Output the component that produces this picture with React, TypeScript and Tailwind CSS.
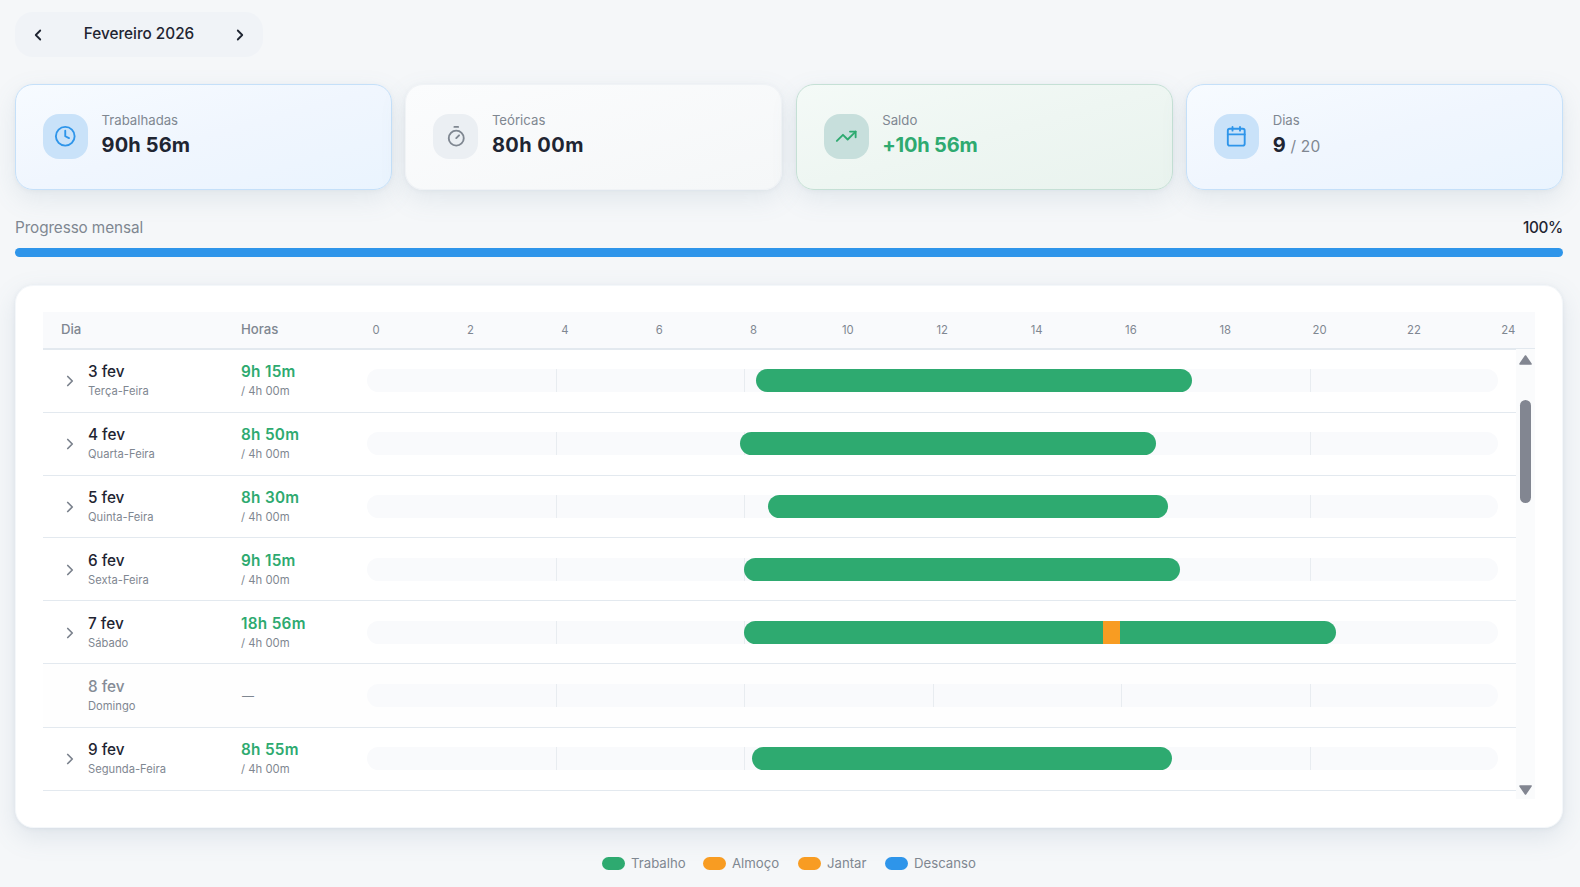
import { Calendar, ChevronLeft, ChevronRight, Clock, Timer, TrendingUp } from "lucide-react";
import type { LucideIcon } from "lucide-react";

type Segment = { from: number; to: number; color: string };
type Day = { day: string; weekday: string; worked?: string; row: string; segments: Segment[] };

const GREEN = "bg-[#2eaa70]";
const ORANGE = "bg-[#f89c22]";
const BLUE = "bg-[#2e95ea]";

const days: Day[] = [
  { day: "3 fev", weekday: "Terça-Feira", row: "h-[63px] pt-[19px]", worked: "9h 15m", segments: [{ from: 8.25, to: 17.5, color: GREEN }] },
  { day: "4 fev", weekday: "Quarta-Feira", row: "h-[63px] pt-[19px]", worked: "8h 50m", segments: [{ from: 7.917, to: 16.75, color: GREEN }] },
  { day: "5 fev", weekday: "Quinta-Feira", row: "h-[62px] pt-[19px]", worked: "8h 30m", segments: [{ from: 8.5, to: 17, color: GREEN }] },
  { day: "6 fev", weekday: "Sexta-Feira", row: "h-[63px] pt-[20px]", worked: "9h 15m", segments: [{ from: 8, to: 17.25, color: GREEN }] },
  {
    day: "7 fev",
    weekday: "Sábado",
    row: "h-[63px] pt-[20px]",
    worked: "18h 56m",
    segments: [
      { from: 8, to: 15.62, color: GREEN },
      { from: 15.62, to: 15.98, color: ORANGE },
      { from: 15.98, to: 20.56, color: GREEN },
    ],
  },
  { day: "8 fev", weekday: "Domingo", row: "h-[64px] pt-[20px]", segments: [] },
  { day: "9 fev", weekday: "Segunda-Feira", row: "h-[63px] pt-[19px]", worked: "8h 55m", segments: [{ from: 8.167, to: 17.083, color: GREEN }] },
];

const ticks = [0, 2, 4, 6, 8, 10, 12, 14, 16, 18, 20, 22, 24];
const gridHours = [4, 8, 12, 16, 20];

function StatCard({
  icon: Icon,
  label,
  value,
  suffix,
  card,
  badge,
  valueClass,
}: {
  icon: LucideIcon;
  label: string;
  value: string;
  suffix?: string;
  card: string;
  badge: string;
  valueClass: string;
}) {
  return (
    <div
      className={`flex h-[106px] items-center gap-[13.5px] rounded-[18px] border bg-linear-to-br px-[27px] pb-[2px] shadow-[0_9px_26px_rgba(100,130,155,0.13),0_1px_4px_rgba(100,130,155,0.08)] ${card}`}
    >
      <div className={`flex size-[45px] items-center justify-center rounded-[16px] ${badge}`}>
        <Icon size={22.5} strokeWidth={2} />
      </div>
      <div className="mb-[2px]">
        <div className="text-[13.2px] leading-[18px] text-[#7f8791]">{label}</div>
        <div className={`mt-[2px] flex h-[28px] items-baseline text-[20px] leading-[28px] font-bold whitespace-pre ${valueClass}`}>
          {value}
          {suffix && <span className="text-[15.5px] font-normal text-[#7f8791]"> {suffix}</span>}
        </div>
      </div>
    </div>
  );
}

function DayRow({ item }: { item: Day }) {
  const off = !item.worked;
  return (
    <div className={`flex shrink-0 items-start border-b border-[#e3e9ef] ${item.row} ${off ? "bg-[#fefefe]" : ""}`}>
      <div className="flex h-[23px] w-[198px] shrink-0 items-center pl-[18px]">
        <div className="flex w-[27px] text-[#7b828d]">{!off && <ChevronRight size={18} strokeWidth={2.3} />}</div>
        <div className="-mt-px">
          <div className={`text-[15.3px] leading-[23px] font-[450] ${off ? "text-[#858c96]" : "text-[#1f2532]"}`}>{item.day}</div>
          <div className="text-[11.2px] leading-[17px] text-[#7f8791]">{item.weekday}</div>
        </div>
      </div>
      <div className="flex h-[23px] w-[126px] shrink-0 flex-col justify-center">
        {off ? (
          <div className="pt-px pl-px text-[12px] leading-[18px] font-medium text-[#7f8791]">—</div>
        ) : (
          <div className="-mt-px">
            <div className="text-[15.3px] leading-[23px] font-semibold tracking-[0.3px] text-[#2eaa70]">{item.worked}</div>
            <div className="text-[11.3px] leading-[17px] text-[#7f8791]">/ 4h 00m</div>
          </div>
        )}
      </div>
      <div className="relative h-[23px] w-[1131px] overflow-hidden rounded-full bg-[#f9fafc]">
        {gridHours.map((h) => (
          <div key={h} className="absolute top-0 h-full w-px bg-[#e8ecf0]" style={{ left: `${(h / 24) * 100}%` }} />
        ))}
        {item.segments.map((s, i) => (
          <div
            key={s.from}
            className={`absolute top-0 h-full ${s.color} ${i === 0 ? "rounded-l-full" : ""} ${i === item.segments.length - 1 ? "rounded-r-full" : ""}`}
            style={{ left: `${(s.from / 24) * 100}%`, width: `${((s.to - s.from) / 24) * 100}%` }}
          />
        ))}
      </div>
    </div>
  );
}

function Legend({ color, label, width }: { color: string; label: string; width: string }) {
  return (
    <div className="flex items-center gap-[6.5px]">
      <span className={`h-[13px] w-[23px] rounded-full ${color}`} />
      <span className={`text-[13.2px] leading-[18px] whitespace-nowrap text-[#7f8791] ${width}`}>{label}</span>
    </div>
  );
}

export default function App() {
  return (
    <div className="flex h-[887px] w-[1580px] flex-col overflow-hidden bg-[#f5f7f9] px-[15px] pt-3 font-['Inter','Liberation_Sans',sans-serif] text-[#1f2532]">
      <div className="flex h-[45px] w-[248px] shrink-0 items-center justify-between rounded-[18px] bg-[#f0f3f7] px-[14px]">
        <ChevronLeft size={18} strokeWidth={2.4} />
        <span className="text-[15.3px] font-[450]">Fevereiro 2026</span>
        <ChevronRight size={18} strokeWidth={2.4} />
      </div>

      <div className="mt-[27px] grid w-[1548px] shrink-0 grid-cols-4 gap-[13.5px]">
        <StatCard icon={Clock} label="Trabalhadas" value="90h 56m" card="border-[#c5e0f9] from-[#f7fbff] via-[#f0f6fe] to-[#eaf4fe]" badge="bg-[#c9e2f9] text-[#2e95ea]" valueClass="tracking-[0.15px]" />
        <StatCard icon={Timer} label="Teóricas" value="80h 00m" card="border-[#f0f3f6] from-[#fbfcfd] to-[#f5f7f8]" badge="bg-[#ebeff3] text-[#7f8791]" valueClass="tracking-[0.45px]" />
        <StatCard icon={TrendingUp} label="Saldo" value="+10h 56m" card="border-[#c5e0d5] from-[#f4faf7] via-[#eef6f2] to-[#e9f3ee]" badge="bg-[#c7dfdc] text-[#2eaa70]" valueClass="tracking-[-0.2px] text-[#2eaa70]" />
        <StatCard icon={Calendar} label="Dias" value="9" suffix="/ 20" card="border-[#c5e0f9] from-[#f7fbff] via-[#f0f6fe] to-[#eaf4fe]" badge="bg-[#c9e2f9] text-[#2e95ea]" valueClass="tracking-[0.2px]" />
      </div>

      <div className="mt-[26px] flex w-[1548px] shrink-0 items-center justify-between text-[15.3px] leading-[23px]">
        <span className="tracking-[-0.1px] text-[#7f8791]">Progresso mensal</span>
        <span className="font-[450] tracking-[-0.3px]">100%</span>
      </div>
      <div className="mt-[9px] h-[9px] w-[1548px] shrink-0 rounded-full bg-[#2e95ea]" />

      <div className="mt-7 h-[543px] w-[1548px] shrink-0 rounded-[18px] border border-[#f4f7fa] bg-white px-[27px] pt-[26px] shadow-[0_9px_26px_rgba(100,130,155,0.15),0_1px_4px_rgba(100,130,155,0.10)]">
        <div className="flex h-[37px] items-center border-b border-[#e3e9ef] bg-[#f9fafc] text-[13.2px] font-medium text-[#7f8791]">
          <span className="w-[198px] shrink-0 pl-[18px]">Dia</span>
          <span className="w-[88px] shrink-0">Horas</span>
          <div className="-mr-[20px] flex shrink-0 text-[11.3px] font-normal">
            {ticks.map((t) => (
              <span key={t} className="w-[94.35px] shrink-0 text-center">
                {t}
              </span>
            ))}
          </div>
        </div>
        <div className="flex h-[450px]">
          <div className="flex w-[1473px] flex-col border-t border-[#e3e9ef]">
            {days.map((d) => (
              <DayRow key={d.day} item={d} />
            ))}
          </div>
          <div className="flex w-[19px] flex-col items-center bg-[#fafbfc] pt-[6px] pb-[4px]">
            <svg width="13" height="10" viewBox="0 0 13 10" className="text-[#828691]">
              <path d="M6.5 1 L12 9 H1 Z" fill="currentColor" stroke="currentColor" strokeWidth="1.6" strokeLinejoin="round" />
            </svg>
            <div className="mt-[35px] h-[103px] w-[11px] rounded-full bg-[#828691]" />
            <svg width="13" height="10" viewBox="0 0 13 10" className="mt-auto text-[#828691]">
              <path d="M6.5 9 L12 1 H1 Z" fill="currentColor" stroke="currentColor" strokeWidth="1.6" strokeLinejoin="round" />
            </svg>
          </div>
        </div>
      </div>

      <div className="mt-[26px] flex w-[1548px] shrink-0 justify-center gap-[18px] pr-[2px]">
        <Legend color={GREEN} label="Trabalho" width="w-[53.5px]" />
        <Legend color={ORANGE} label="Almoço" width="w-[47.5px]" />
        <Legend color={ORANGE} label="Jantar" width="w-[39.5px]" />
        <Legend color={BLUE} label="Descanso" width="w-[60.5px]" />
      </div>
    </div>
  );
}
